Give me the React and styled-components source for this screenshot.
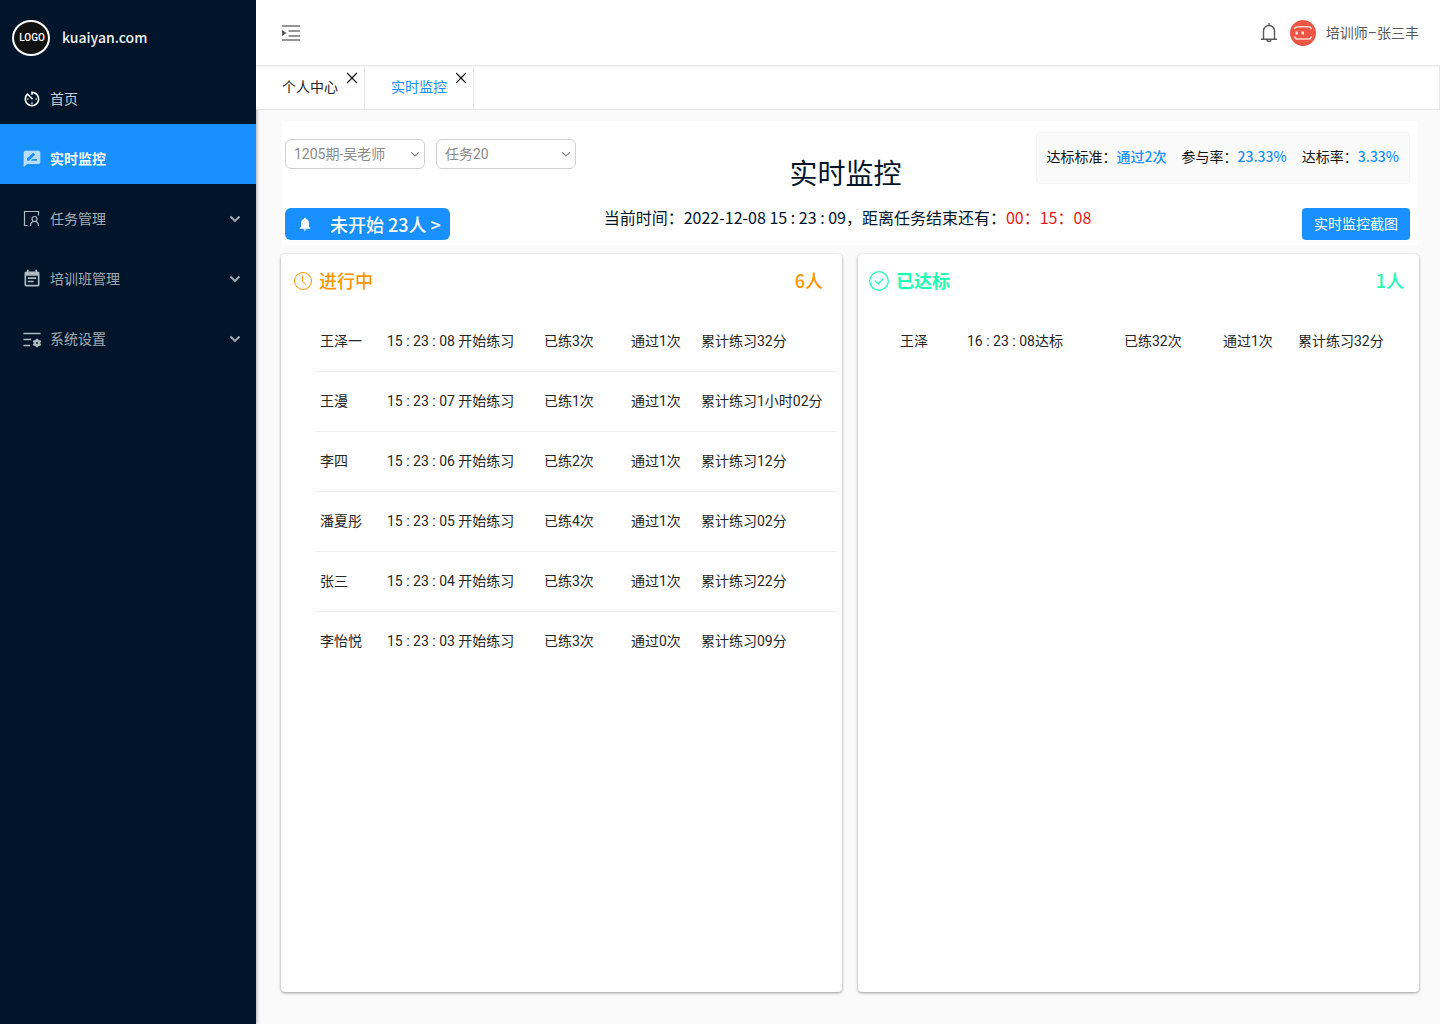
import React from 'react';
import styled, { createGlobalStyle, css } from 'styled-components';
import { MdAvTimer, MdEventNote, MdNotifications, MdRateReview } from 'react-icons/md';

const GlobalStyle = createGlobalStyle`
  * {
    box-sizing: border-box;
  }

  body {
    margin: 0;
    background: #fafafa;
    color: #000;
    font-family: Roboto, 'Noto Sans CJK SC', sans-serif;
    font-size: 14px;
    font-weight: 400;
    line-height: 20px;
  }

  button,
  select {
    font: inherit;
  }
`;

const cjk = css`
  font-family: 'Noto Sans CJK SC', sans-serif;
`;

const Layout = styled.div`
  display: grid;
  grid-template-columns: 256px minmax(0, 1fr);
  min-height: 100vh;
`;

const Sidebar = styled.aside`
  background: #001529;
  box-shadow: 1px 0 3px rgba(0, 0, 0, 0.3);
`;

const Brand = styled.div`
  display: flex;
  align-items: center;
  gap: 12px;
  height: 74px;
  padding: 2px 12px 0;
  color: #f0f2f5;
  font-weight: 500;
  ${cjk}
`;

const BrandName = styled.span`
  padding-bottom: 2px;
`;

const Logo = styled.div`
  display: flex;
  align-items: center;
  justify-content: center;
  width: 38px;
  height: 36px;
  padding-left: 2px;
  border: 2px solid #fff;
  border-radius: 50%;
  background: #111;
  color: #fff;
  font-family: Roboto, sans-serif;
  font-size: 10px;
`;

const NavLink = styled.a`
  display: flex;
  align-items: center;
  gap: 8px;
  height: ${({ $short }) => ($short ? '50px' : '60px')};
  padding: ${({ $short }) => ($short ? '0' : '10px')} 15px 0 22px;
  background: ${({ $active }) => ($active ? '#1890ff' : 'transparent')};
  color: rgba(255, 255, 255, ${({ $active, $short }) => ($active ? 0.95 : $short ? 0.8 : 0.65)});
  font-weight: ${({ $active }) => ($active ? 700 : 400)};
  text-decoration: none;
  ${cjk}

  > svg:first-child {
    flex: none;
    color: ${({ $short, $active }) => ($short ? '#fff' : $active ? '#badeff' : '#b2b9bf')};
  }
`;

const NavText = styled.span`
  flex: 1;
  padding-bottom: 2px;
`;

const Main = styled.div`
  display: flex;
  flex-direction: column;
  min-width: 0;
`;

const Header = styled.header`
  position: relative;
  z-index: 1;
  display: flex;
  align-items: center;
  justify-content: space-between;
  height: 66px;
  padding: 0 21px 0 26px;
  border-bottom: 1px solid #ebebeb;
  background: #fff;
`;

const IconButton = styled.button`
  display: flex;
  padding: 0;
  border: 0;
  background: none;
  color: #595959;
  cursor: pointer;
`;

const UserBox = styled.div`
  display: flex;
  align-items: center;
  gap: 10px;
  color: #595959;
`;

const TabBar = styled.nav`
  display: flex;
  height: 44px;
  border: 1px solid #e8e8e8;
  border-top-color: #f5f5f5;
  border-left: 0;
  background: #fff;
`;

const Tab = styled.div`
  display: flex;
  align-items: flex-start;
  gap: 9px;
  padding: 5px 7px 0 26px;
  border-right: 1px solid #e8e8e8;
`;

const TabLink = styled.a`
  margin-top: 4px;
  color: ${({ $active }) => ($active ? '#1890ff' : '#262626')};
  text-decoration: none;
  ${cjk}
`;

const Content = styled.main`
  display: flex;
  flex: 1;
  flex-direction: column;
  gap: 9px;
  padding: 11px 21px 32px 25px;
`;

const Summary = styled.section`
  display: grid;
  gap: 15px;
  margin: 0 1px;
  padding: 11px 8px 5px 3px;
  background: #fff;
`;

const SummaryRow = styled.div`
  display: grid;
  grid-template-columns: 1fr auto 1fr;
  align-items: start;

  > :last-child {
    justify-self: end;
  }
`;

const Filters = styled.div`
  display: flex;
  gap: 11px;
  margin-top: 7px;
`;

const SelectBox = styled.label`
  position: relative;
  width: 140px;
  color: #8c8c8c;

  > svg {
    position: absolute;
    top: 12px;
    right: 5px;
    pointer-events: none;
  }
`;

const Select = styled.select`
  width: 100%;
  height: 30px;
  padding: 0 20px 0 8px;
  border: 1px solid #d0d0d0;
  border-radius: 6px;
  background: #fff;
  color: #8c8c8c;
  appearance: none;
`;

const PageTitle = styled.h1`
  margin: 20px 0 1px;
  padding-right: 4px;
  color: #001529;
  font-size: 28px;
  font-weight: 400;
  line-height: 40px;
  ${cjk}
`;

const Stats = styled.div`
  display: flex;
  gap: 15px;
  height: 52px;
  padding: 13px 10px;
  border: 1px solid #f3f3f3;
  border-radius: 4px;
  background: #fafafa;
  color: #141414;
  white-space: nowrap;
  ${cjk}
`;

const StatValue = styled.span`
  color: #1890ff;
  font-weight: 500;
`;

const Waiting = styled.button`
  display: flex;
  align-items: center;
  justify-self: start;
  gap: 17px;
  height: 32px;
  padding: 0 9px 1px 12px;
  border: 0;
  border-radius: 6px;
  background: #1890ff;
  color: #fff;
  font-size: 18px;
  font-weight: 500;
  cursor: pointer;
  ${cjk}
`;

const Clock = styled.p`
  margin: 0;
  color: #001529;
  font-size: 16px;
  line-height: 18px;
  ${cjk}
`;

const Countdown = styled.span`
  color: #e61a1a;
`;

const Capture = styled.button`
  height: 32px;
  padding: 0 12px 2px;
  border: 0;
  border-radius: 4px;
  background: #1890ff;
  color: #fff;
  cursor: pointer;
  ${cjk}
`;

const Cards = styled.div`
  display: grid;
  flex: 1;
  grid-template-columns: 1fr 1fr;
  gap: 16px;
`;

const Card = styled.section`
  border-radius: 4px;
  background: #fff;
  box-shadow: 0 1px 3px rgba(0, 0, 0, 0.4);
`;

const CardHead = styled.header`
  display: flex;
  align-items: center;
  gap: 6px;
  height: 54px;
  padding: 0 ${({ $right }) => $right} 0 ${({ $left }) => $left};
  color: ${({ $color }) => $color};
  font-size: 18px;
  font-weight: 500;
  ${cjk}
`;

const CardTitle = styled.h2`
  flex: 1;
  margin: 0;
  padding-bottom: 2px;
  font-size: 18px;
  font-weight: ${({ $bold }) => ($bold ? 700 : 500)};
`;

const CardCount = styled.span`
  padding-bottom: 2px;
`;

const TableWrap = styled.div`
  padding: 4px 5px 0 ${({ $left }) => $left};
`;

const Table = styled.table`
  width: 100%;
  border-collapse: separate;
  border-spacing: 0;
  table-layout: fixed;
`;

const Cell = styled.td`
  height: 60px;
  padding: 0 0 2px;
  color: #262626;
  white-space: nowrap;

  &:first-child {
    padding-left: 5px;
  }

  tr:not(:last-child) > & {
    border-bottom: 1px solid #f0f0f0;
  }
`;

const Chevron = ({ size = 12, stroke = 2 }) => (
  <svg width={size} height={(size * 2) / 3} viewBox="0 0 12 8" fill="none">
    <path d="M1.5 1.5 6 6l4.5-4.5" stroke="currentColor" strokeWidth={stroke} />
  </svg>
);

const UnfoldIcon = () => (
  <svg width="18" height="18" viewBox="0 0 18 18" fill="none" stroke="#737373" strokeWidth="2">
    <path d="M0 2h18M6.500 7H18M6.500 12H18M0 16h18" strokeWidth="1.700" />
    <path d="M0 6v6l4.500-3z" fill="#595959" stroke="none" />
  </svg>
);

const TaskIcon = () => (
  <svg width="20" height="20" viewBox="0 0 20 20" fill="none" stroke="currentColor" strokeWidth="1.2">
    <path d="M5.500 16.500h-3v-14h14v4" />
    <circle cx="12.500" cy="10" r="2.500" />
    <path d="M8.500 17c0-2.500 1.400-4.500 4-4.500s4 2 4 4.500" />
  </svg>
);

const SettingIcon = () => (
  <svg width="20" height="20" viewBox="0 0 20 20" fill="none" stroke="currentColor">
    <path d="M1.500 4.500h17M1.500 10.500H9M1.500 16.500H8" strokeWidth="1.500" />
    <circle cx="15" cy="14" r="2.200" strokeWidth="2.600" />
    <path d="M15 9.800v1.500M15 16.700v1.500M11.300 11.900l1.300.7M17.400 15.400l1.300.7M11.300 16.100l1.300-.7M17.400 12.600l1.300-.7" strokeWidth="2.200" />
  </svg>
);

const BellIcon = () => (
  <svg width="20" height="22" viewBox="0 0 20 22" fill="none" stroke="currentColor" strokeWidth="1.400">
    <path d="M3.500 17V9a5.500 5.500 0 0 1 11 0v8" />
    <path d="M1 17.200h16M9 1v2.300M7 17.500c0 2.600 4 2.600 4 0" />
  </svg>
);

const Avatar = () => (
  <svg width="26" height="26" viewBox="0 0 26 26" fill="none">
    <circle cx="13" cy="13" r="13" fill="#ed5545" />
    <path
      d="M4.500 9c.4-1.700 1.500-2.300 3.300-2.300h10.400c1.800 0 2.900.6 3.300 2.300M4.500 16.500c.4 1.700 1.500 2.500 3.300 2.500h10.400c1.800 0 2.900-.8 3.300-2.500"
      stroke="#ffd5cf"
      strokeWidth="1.500"
    />
    <path d="M5.500 11.500H8v3H5.500zM11.500 11.500H14v3h-2.500z" fill="#ffe3df" />
  </svg>
);

const CloseIcon = () => (
  <svg width="10" height="12" viewBox="0 0 10 12" fill="none" stroke="#000" strokeWidth="1.200">
    <path d="m0 1 10 10M10 1 0 11" />
  </svg>
);

const ClockIcon = () => (
  <svg width="20" height="20" viewBox="0 0 20 20" fill="none" stroke="currentColor" strokeWidth="1">
    <circle cx="10" cy="10" r="8.500" />
    <path d="M9.500 4.500v6l3.500 3" />
  </svg>
);

const CheckIcon = () => (
  <svg width="22" height="22" viewBox="0 0 22 22" fill="none" stroke="currentColor" strokeWidth="1.300">
    <circle cx="11" cy="11" r="9.300" />
    <path d="m6.800 10.500 3.400 3.400 5-5.200" />
  </svg>
);

const menus = [
  { label: '任务管理', icon: <TaskIcon /> },
  { label: '培训班管理', icon: <MdEventNote size={20} /> },
  { label: '系统设置', icon: <SettingIcon /> },
];

const stats = [
  ['达标标准：', '通过2次'],
  ['参与率：', '23.33%'],
  ['达标率：', '3.33%'],
];

const running = [
  ['王泽一', '15 : 23 : 08 开始练习', '已练3次', '通过1次', '累计练习32分'],
  ['王漫', '15 : 23 : 07 开始练习', '已练1次', '通过1次', '累计练习1小时02分'],
  ['李四', '15 : 23 : 06 开始练习', '已练2次', '通过1次', '累计练习12分'],
  ['潘夏彤', '15 : 23 : 05 开始练习', '已练4次', '通过1次', '累计练习02分'],
  ['张三', '15 : 23 : 04 开始练习', '已练3次', '通过1次', '累计练习22分'],
  ['李怡悦', '15 : 23 : 03 开始练习', '已练3次', '通过0次', '累计练习09分'],
];

const finished = [['王泽', '16 : 23 : 08达标', '已练32次', '通过1次', '累计练习32分']];

const RecordTable = ({ rows, widths, left, label }) => (
  <TableWrap $left={left}>
    <Table aria-label={label}>
      <colgroup>
        {widths.map((width, i) => (
          <col key={i} style={{ width }} />
        ))}
      </colgroup>
      <tbody>
        {rows.map((row) => (
          <tr key={row[0]}>
            {row.map((text, i) => (
              <Cell key={i}>{text}</Cell>
            ))}
          </tr>
        ))}
      </tbody>
    </Table>
  </TableWrap>
);

const FilterSelect = ({ label, value }) => (
  <SelectBox>
    <Select aria-label={label} defaultValue={value}>
      <option>{value}</option>
    </Select>
    <Chevron size={10} stroke={1.4} />
  </SelectBox>
);

const App = () => (
  <>
    <GlobalStyle />
    <Layout>
      <Sidebar>
        <Brand>
          <Logo>LOGO</Logo>
          <BrandName>kuaiyan.com</BrandName>
        </Brand>
        <nav>
          <NavLink href="#home" $short>
            <MdAvTimer size={20} />
            <NavText>首页</NavText>
          </NavLink>
          <NavLink href="#monitor" $active>
            <MdRateReview size={20} />
            <NavText>实时监控</NavText>
          </NavLink>
          {menus.map(({ label, icon }) => (
            <NavLink key={label} href="#menu">
              {icon}
              <NavText>{label}</NavText>
              <Chevron stroke={1.8} />
            </NavLink>
          ))}
        </nav>
      </Sidebar>
      <Main>
        <Header>
          <IconButton aria-label="展开菜单">
            <UnfoldIcon />
          </IconButton>
          <UserBox>
            <IconButton aria-label="通知">
              <BellIcon />
            </IconButton>
            <Avatar />
            <span>培训师–张三丰</span>
          </UserBox>
        </Header>
        <TabBar>
          <Tab>
            <TabLink href="#profile">个人中心</TabLink>
            <IconButton aria-label="关闭个人中心">
              <CloseIcon />
            </IconButton>
          </Tab>
          <Tab>
            <TabLink href="#monitor" $active>
              实时监控
            </TabLink>
            <IconButton aria-label="关闭实时监控">
              <CloseIcon />
            </IconButton>
          </Tab>
        </TabBar>
        <Content>
          <Summary>
            <SummaryRow>
              <Filters>
                <FilterSelect label="培训班" value="1205期-吴老师" />
                <FilterSelect label="任务" value="任务20" />
              </Filters>
              <PageTitle>实时监控</PageTitle>
              <Stats>
                {stats.map(([label, value]) => (
                  <span key={label}>
                    {label}
                    <StatValue>{value}</StatValue>
                  </span>
                ))}
              </Stats>
            </SummaryRow>
            <SummaryRow>
              <Waiting>
                <MdNotifications size={16} />
                未开始 23人 &gt;
              </Waiting>
              <Clock>
                当前时间：2022-12-08 15 : 23 : 09，距离任务结束还有：<Countdown>00：15：08</Countdown>
              </Clock>
              <Capture>实时监控截图</Capture>
            </SummaryRow>
          </Summary>
          <Cards>
            <Card>
              <CardHead $color="#ff9500" $left="12px" $right="19px">
                <ClockIcon />
                <CardTitle>进行中</CardTitle>
                <CardCount>6人</CardCount>
              </CardHead>
              <RecordTable
                label="进行中"
                rows={running}
                left="34px"
                widths={['72px', '157px', '87px', '70px', 'auto']}
              />
            </Card>
            <Card>
              <CardHead $color="#1fffb4" $left="10px" $right="15px">
                <CheckIcon />
                <CardTitle $bold>已达标</CardTitle>
                <CardCount>1人</CardCount>
              </CardHead>
              <RecordTable
                label="已达标"
                rows={finished}
                left="37px"
                widths={['72px', '157px', '99px', '75px', 'auto']}
              />
            </Card>
          </Cards>
        </Content>
      </Main>
    </Layout>
  </>
);

export default App;
